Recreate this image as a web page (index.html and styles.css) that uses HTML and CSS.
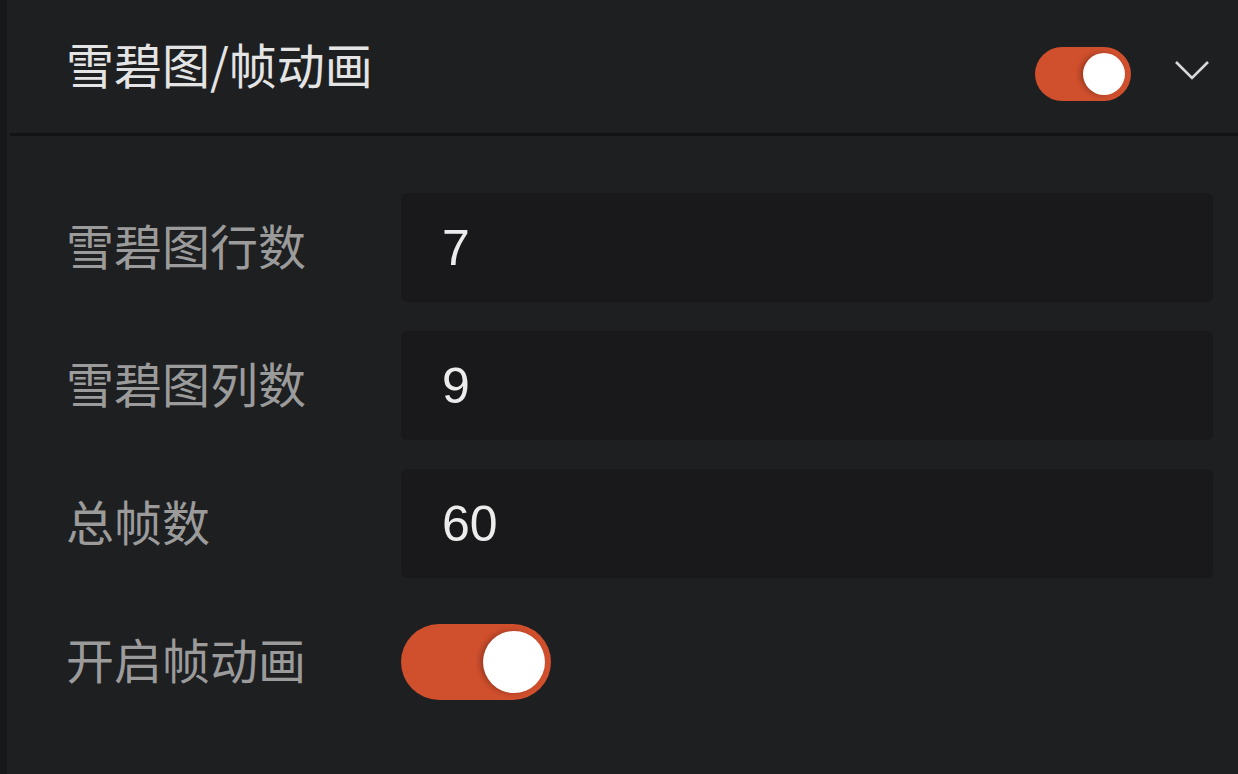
FILE: index.html
```html
<!DOCTYPE html>
<html lang="zh-CN">
<head>
	<meta charset="UTF-8">
	<title>雪碧图/帧动画</title>
	<link rel="stylesheet" href="styles.css">
</head>
<body>
	<div class="strip"></div>
	<div class="panel">
		<header class="panel-head">
			<h2>雪碧图/帧动画</h2>
			<span class="switch small on"><span class="knob"></span></span>
			<svg class="chevron" width="36" height="22" viewBox="0 0 36 22">
				<path d="M2 3 L18 19 L34 3" fill="none" stroke="#d8d8d8" stroke-width="2.6"/>
			</svg>
		</header>
		<section class="panel-body">
			<div class="row">
				<label>雪碧图行数</label>
				<div class="field">7</div>
			</div>
			<div class="row">
				<label>雪碧图列数</label>
				<div class="field">9</div>
			</div>
			<div class="row">
				<label>总帧数</label>
				<div class="field">60</div>
			</div>
			<div class="row">
				<label>开启帧动画</label>
				<span class="switch big on"><span class="knob"></span></span>
			</div>
		</section>
	</div>
</body>
</html>
```
FILE: styles.css
```css
html, body {
    margin: 0;
    height: 100%;
}
body {
    display: flex;
    background-color: #1e1f21;
    font-family: "Noto Sans CJK SC", "Liberation Sans", sans-serif;
    overflow: hidden;
}
.strip {
    width: 7px;
    background-color: #17181a;
}
.panel {
    flex: 1;
}
.panel-head {
    display: flex;
    align-items: center;
    height: 133px;
    margin-left: 3px;
    padding: 0 28px 0 56px;
    border-bottom: 3px solid #121315;
}
.panel-head h2 {
    flex: 1;
    margin: 0;
    margin-top: -8px;
    color: #e4e4e4;
    font-size: 48px;
    font-weight: normal;
    line-height: 1;
}
.chevron {
    margin-left: 43px;
    margin-top: 6px;
}
.panel-body {
    display: flex;
    flex-direction: column;
    gap: 29px;
    padding: 57px 25px 0 59px;
}
.row {
    display: flex;
    align-items: center;
    height: 109px;
}
.row label {
    width: 335px;
    color: #9b9b9b;
    font-size: 48px;
    line-height: 1;
    margin-top: -8px;
}
.field {
    flex: 1;
    height: 109px;
    box-sizing: border-box;
    padding-left: 41px;
    display: flex;
    align-items: center;
    background-color: #19191b;
    border-radius: 6px;
    color: #ececec;
    font-family: "Liberation Sans", sans-serif;
    font-size: 50px;
}
.switch {
    position: relative;
    display: inline-block;
    background-color: #d04f2d;
    flex: none;
}
.switch .knob {
    position: absolute;
    top: 50%;
    background-color: #fff;
    border-radius: 50%;
    box-shadow: -3px 0 5px rgba(0, 0, 0, 0.25);
}
.switch.small {
    width: 96px;
    height: 54px;
    border-radius: 27px;
    margin-top: 14px;
}
.switch.small .knob {
    width: 42px;
    height: 42px;
    margin-top: -21px;
    right: 6px;
}
.switch.big {
    width: 150px;
    height: 76px;
    border-radius: 38px;
    margin-top: 0;
}
.switch.big .knob {
    width: 62px;
    height: 62px;
    margin-top: -31px;
    right: 6px;
}
```
